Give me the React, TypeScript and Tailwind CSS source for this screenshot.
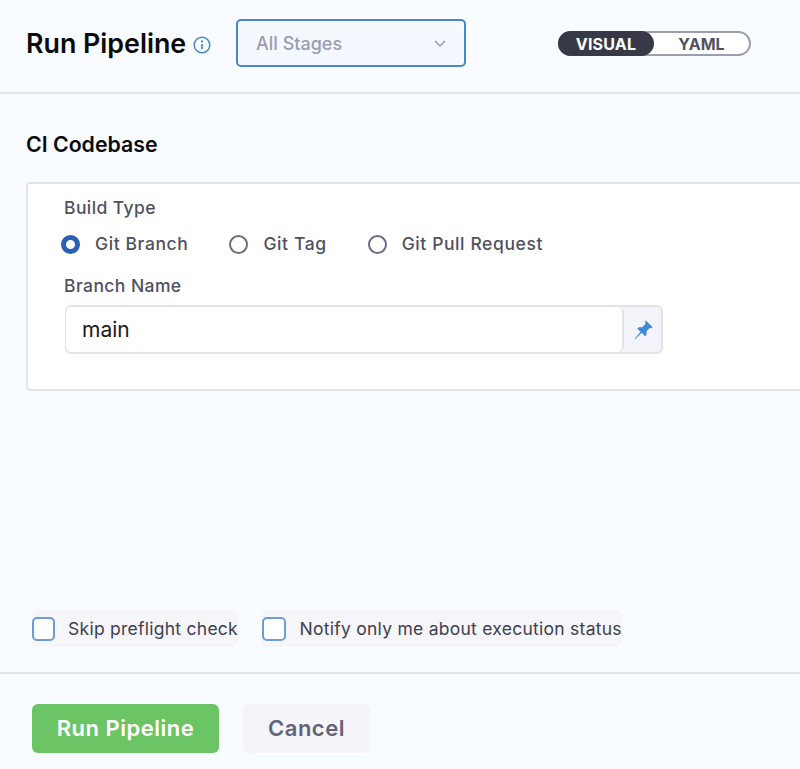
import React from "react";

function Radio({ checked, label }: { checked?: boolean; label: string }) {
  return (
    <div className="flex items-center gap-[15px]">
      {checked ? (
        <span className="w-[19px] h-[19px] rounded-full border-[5px] border-[#2a5fb5] bg-white" />
      ) : (
        <span className="w-[19px] h-[19px] rounded-full border-2 border-[#6b6d85] bg-white" />
      )}
      <span className="text-[17.5px] leading-[24px] font-medium tracking-[0.6px] text-[#4f5162]">{label}</span>
    </div>
  );
}

function Check({ label, width }: { label: string; width: string }) {
  return (
    <div className={`flex items-center h-[37px] rounded-md bg-[#f5f5fa] ${width}`}>
      <span className="w-[24px] h-[24px] rounded-[5px] border-2 border-[#6d9bd8] bg-white" />
      <span className="ml-[13.5px] text-[17.5px] leading-[24px] tracking-[0.26px] text-[#3f404e] whitespace-nowrap">{label}</span>
    </div>
  );
}

export default function App() {
  return (
    <div className="w-[800px] h-[769px] overflow-hidden flex flex-col bg-[#f8fbff] font-['Inter',sans-serif]">
      <header className="h-[94px] shrink-0 flex items-start border-b-2 border-[#e2e4ea] pl-[26px]">
        <h1 className="mt-[25px] w-[161px] text-[26.8px] leading-[36px] font-semibold text-[#0b0b0d] whitespace-nowrap">Run Pipeline</h1>
        <svg className="mt-[36px] ml-[6px]" width="18" height="18" viewBox="0 0 18 18" fill="none">
          <circle cx="9" cy="9" r="7.8" stroke="#4a85c9" strokeWidth="1.5" />
          <circle cx="9" cy="5.4" r="1.1" fill="#4a85c9" />
          <path d="M9 8v5.2" stroke="#4a85c9" strokeWidth="1.7" />
        </svg>
        <div className="mt-[19px] ml-[25px] w-[230px] h-[48px] rounded-[5px] border-2 border-[#4a85c9] bg-[#f3f9ff] flex items-center pl-[18px] pr-[17px] pt-px justify-between">
          <span className="text-[18px] font-medium text-[#9a9db0]">All Stages</span>
          <svg width="14" height="9" viewBox="0 0 14 9" fill="none">
            <path d="M2 2l5 5 5-5" stroke="#9a9db0" strokeWidth="1.5" />
          </svg>
        </div>
        <div className="mt-[31px] ml-[92px] w-[193px] h-[25px] rounded-full border-2 border-[#9c9eae] bg-white flex items-center">
          <span className="-ml-[2px] w-[96px] h-[25px] pt-px rounded-full bg-[#383946] flex items-center justify-center text-[16px] tracking-[0.2px] font-bold text-white">VISUAL</span>
          <span className="flex-1 text-center pt-px text-[16px] font-bold text-[#4f5162]">YAML</span>
        </div>
      </header>

      <section className="flex-1 pl-[26px] flex flex-col">
        <h2 className="mt-[36px] text-[21.3px] leading-[28px] font-semibold text-[#0b0b0d]">CI Codebase</h2>
        <div className="mt-[24px] h-[209px] rounded-l-[4px] border-2 border-r-0 border-[#e2e4ea] bg-white pl-[36px] pt-[12px]">
          <div className="text-[17.5px] leading-[24px] font-medium tracking-[0.42px] text-[#4f5162]">Build Type</div>
          <div className="mt-[12px] -ml-[3px] flex items-center gap-[41px]">
            <Radio checked label="Git Branch" />
            <Radio label="Git Tag" />
            <Radio label="Git Pull Request" />
          </div>
          <div className="mt-[18px] text-[17.5px] leading-[24px] font-medium tracking-[0.42px] text-[#4f5162]">Branch Name</div>
          <div className="mt-[7px] ml-px flex w-[598px] h-[49px] rounded-[6px] border-2 border-[#e2e4ea] bg-[#f3f4fa]">
            <div className="w-[558px] h-full -ml-px rounded-[6px] border-r-2 border-[#e2e4ea] bg-white flex items-center pl-[16px] pt-px text-[21px] text-[#1b1b22]">main</div>
            <div className="flex-1 flex items-center justify-center">
              <svg width="22" height="22" viewBox="0 0 20 20" fill="#418ad8">
                <path d="M12.4 1.2l6.4 6.2-1.5 1.1-1.2-.3-3 3.1.1 3.1-1.3 1.2-3-3-5.8 5.5-.9.1 5.6-6.5-3-2.9 1.3-1.4 3.2.1 2.9-3-.2-1.2z" />
              </svg>
            </div>
          </div>
        </div>
        <div className="mt-auto mb-[25px] -ml-px flex items-center gap-[24px] pl-[7px]">
          <Check label="Skip preflight check" width="w-[206px]" />
          <Check label="Notify only me about execution status" width="w-[360px]" />
        </div>
      </section>

      <footer className="h-[97px] shrink-0 border-t-2 border-[#e2e4ea] flex items-start pl-[32px] pt-[30px] gap-[24px]">
        <button className="w-[187px] h-[49px] rounded-[6px] bg-[#6cc565] text-[22px] tracking-[0.5px] font-semibold text-white">Run Pipeline</button>
        <button className="w-[127px] h-[49px] rounded-[6px] bg-[#f4f4f9] text-[22px] tracking-[0.5px] font-semibold text-[#62647a]">Cancel</button>
      </footer>
    </div>
  );
}
